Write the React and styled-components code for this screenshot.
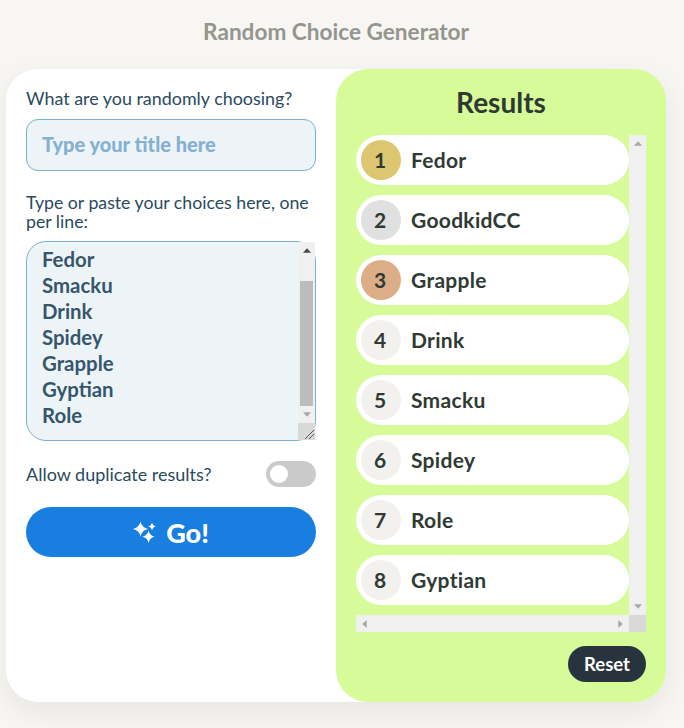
import { useEffect, useRef } from "react";
import styled, { createGlobalStyle } from "styled-components";

const GlobalStyle = createGlobalStyle`
  * {
    box-sizing: border-box;
  }
  html, body {
    margin: 0;
    padding: 0;
    background-color: #f7f6f3;
    font-family: Lato, "Noto Sans", sans-serif;
  }
`;

const Page = styled.div`
  width: 684px;
  height: 728px;
  padding: 0 18px 0 6px;
  overflow: hidden;
`;

const PageTitle = styled.h1`
  margin: 0;
  height: 69px;
  padding-top: 18px;
  font-size: 22.6px;
  line-height: 28px;
  font-weight: 700;
  text-align: center;
  color: #94958d;
`;

const Card = styled.div`
  display: grid;
  grid-template-columns: 330px 330px;
  height: 633px;
  background-color: #fff;
  border-radius: 32px;
  box-shadow: 0 10px 30px rgba(0, 0, 0, 0.07);
`;

const FormPanel = styled.div`
  display: flex;
  flex-direction: column;
  padding: 20px;
`;

const Label = styled.label`
  display: block;
  font-size: ${(p) => p.$size || "17.9px"};
  line-height: 19px;
  color: #2a4a5e;
`;

const TitleInput = styled.input`
  display: block;
  width: 100%;
  height: 52px;
  margin: 11px 0 22px;
  padding: 0 15px 3px;
  border: 1px solid #7ab0d0;
  border-radius: 12px;
  background-color: #edf4f8;
  font: 900 20px Lato, sans-serif;
  color: #2a4a5e;
  outline: none;

  &::placeholder {
    color: #85b0d0;
    opacity: 1;
  }
`;

const ChoicesField = styled.div`
  position: relative;
  height: 200px;
  margin: 10px 0 20px;
`;

const ChoicesInput = styled.textarea`
  display: block;
  width: 100%;
  height: 100%;
  padding: 14px 15px;
  border: 1px solid #7ab0d0;
  border-radius: 20px;
  background-color: #edf4f8;
  font: 700 20.4px/26px Lato, sans-serif;
  color: #36566c;
  outline: none;
  overflow: hidden;
  resize: none;
`;

const ChoicesScrollbar = styled.div`
  position: absolute;
  top: 1px;
  right: 1px;
  bottom: 1px;
  width: 17px;
  display: flex;
  flex-direction: column;
  background-color: #f0f0f0;
`;

const ScrollButton = styled.span`
  display: flex;
  align-items: center;
  justify-content: center;
  flex: 0 0 17px;
  height: 17px;
  width: 17px;
`;

const ScrollThumb = styled.span`
  flex: 1;
  margin: 22px 2px 0;
  background-color: #bcbcbc;
`;

const ScrollCorner = styled.span`
  display: block;
  flex: 0 0 17px;
  height: 17px;
  width: 17px;
  background-color: #d9d9d9;
`;

const ToggleRow = styled.div`
  display: flex;
  align-items: center;
  justify-content: space-between;
  height: 26px;
  margin-bottom: 20px;
`;

const Toggle = styled.input`
  appearance: none;
  display: flex;
  align-items: center;
  width: 50px;
  height: 26px;
  margin: 0;
  padding: 0 4px;
  border-radius: 13px;
  background-color: #cacaca;

  &::before {
    content: "";
    width: 18px;
    height: 18px;
    border-radius: 50%;
    background-color: #fff;
  }
`;

const GoButton = styled.button`
  display: flex;
  align-items: center;
  justify-content: center;
  gap: 10px;
  width: 100%;
  height: 50px;
  padding: 0;
  border: none;
  border-radius: 25px;
  background-color: #187ee0;
  font: 900 27px Lato, sans-serif;
  color: #fff;
`;

const ResultsPanel = styled.div`
  display: flex;
  flex-direction: column;
  padding: 20px;
  background-color: #d7fb98;
  border-radius: 32px;
`;

const ResultsTitle = styled.h2`
  margin: 0 0 17px;
  height: 29px;
  font-size: 28px;
  line-height: 27px;
  font-weight: 700;
  text-align: center;
  color: #2c3a33;
`;

const ResultFrame = styled.div`
  display: grid;
  grid-template-columns: 273px 17px;
  grid-template-rows: 480px 17px;
`;

const ResultList = styled.ol`
  display: flex;
  flex-direction: column;
  gap: 10px;
  margin: 0;
  padding: 0;
  list-style: none;
  overflow: hidden;
`;

const ResultRow = styled.li`
  display: flex;
  align-items: center;
  gap: 10px;
  flex: 0 0 50px;
  padding: 0 5px;
  border-radius: 25px;
  background-color: #fff;
  font-size: 21px;
  font-weight: 700;
  color: #2f3a33;
`;

const ResultName = styled.span`
  margin-bottom: 2px;
  letter-spacing: 0.3px;
`;

const medalColors = { 1: "#dcc66f", 2: "#e0e0e0", 3: "#dcae88" };

const Rank = styled.span`
  display: flex;
  align-items: center;
  justify-content: center;
  width: 40px;
  height: 40px;
  padding: 0 2px 2px 0;
  border-radius: 50%;
  background-color: ${(p) => medalColors[p.$rank] || "#f2f1ee"};
`;

const ScrollTrack = styled.div`
  display: flex;
  flex-direction: ${(p) => (p.$horizontal ? "row" : "column")};
  justify-content: space-between;
  background-color: #f0f0f0;
`;

const Footer = styled.div`
  display: flex;
  justify-content: flex-end;
  margin-top: 14px;
`;

const ResetButton = styled.button`
  width: 78px;
  height: 36px;
  padding: 0;
  border: none;
  border-radius: 18px;
  background-color: #27343e;
  font: 700 18.5px Lato, sans-serif;
  color: #fff;
`;

const results = ["Fedor", "GoodkidCC", "Grapple", "Drink", "Smacku", "Spidey", "Role", "Gyptian"];
const choices = "GoodkidCC\nFedor\nSmacku\nDrink\nSpidey\nGrapple\nGyptian\nRole";

const arrowPoints = {
  up: "0,4.5 8,4.5 4,0",
  down: "0,0 8,0 4,4.5",
  left: "4.5,0 4.5,8 0,4",
  right: "0,0 0,8 4.5,4",
};

function Arrow({ dir, color = "#a8a8a8" }) {
  const flat = dir === "up" || dir === "down";
  return (
    <svg width={flat ? 8 : 5} height={flat ? 5 : 8} viewBox={flat ? "0 0 8 4.5" : "0 0 4.5 8"}>
      <polygon points={arrowPoints[dir]} fill={color} />
    </svg>
  );
}

// four pointed star, slightly fat in the middle
const star = (x, y, r) => {
  const c = r * 0.17;
  return `M${x} ${y - r}Q${x + c} ${y - c} ${x + r} ${y}Q${x + c} ${y + c} ${x} ${y + r}Q${x - c} ${y + c} ${x - r} ${y}Q${x - c} ${y - c} ${x} ${y - r}Z`;
};

function Sparkles() {
  return (
    <svg width="23" height="22" viewBox="0 0 23 22" fill="#fff">
      <path d={star(7.5, 8, 7.5)} />
      <path d={star(19, 5.5, 3.9)} />
      <path d={star(15.5, 15.8, 6.2)} />
    </svg>
  );
}

export default function App() {
  const choicesRef = useRef(null);

  useEffect(() => {
    choicesRef.current.scrollTop = 36;
  }, []);

  return (
    <Page>
      <GlobalStyle />
      <PageTitle>Random Choice Generator</PageTitle>
      <Card>
        <FormPanel>
          <Label htmlFor="title">What are you randomly choosing?</Label>
          <TitleInput id="title" placeholder="Type your title here" />
          <Label htmlFor="choices" $size="17.7px">
            Type or paste your choices here, one per line:
          </Label>
          <ChoicesField>
            <ChoicesInput id="choices" ref={choicesRef} defaultValue={choices} spellCheck={false} />
            <ChoicesScrollbar>
              <ScrollButton>
                <Arrow dir="up" color="#484848" />
              </ScrollButton>
              <ScrollThumb />
              <ScrollButton>
                <Arrow dir="down" />
              </ScrollButton>
              <ScrollCorner>
                <svg width="17" height="17">
                  <path d="M7 16 16 7M11 16 16 11" stroke="#555" />
                </svg>
              </ScrollCorner>
            </ChoicesScrollbar>
          </ChoicesField>
          <ToggleRow>
            <Label htmlFor="duplicates" $size="18px">
              Allow duplicate results?
            </Label>
            <Toggle id="duplicates" type="checkbox" />
          </ToggleRow>
          <GoButton>
            <Sparkles />
            Go!
          </GoButton>
        </FormPanel>
        <ResultsPanel>
          <ResultsTitle>Results</ResultsTitle>
          <ResultFrame>
            <ResultList>
              {results.map((name, i) => (
                <ResultRow key={name}>
                  <Rank $rank={i + 1}>{i + 1}</Rank>
                  <ResultName>{name}</ResultName>
                </ResultRow>
              ))}
            </ResultList>
            <ScrollTrack>
              <ScrollButton>
                <Arrow dir="up" />
              </ScrollButton>
              <ScrollButton>
                <Arrow dir="down" />
              </ScrollButton>
            </ScrollTrack>
            <ScrollTrack $horizontal>
              <ScrollButton>
                <Arrow dir="left" />
              </ScrollButton>
              <ScrollButton>
                <Arrow dir="right" />
              </ScrollButton>
            </ScrollTrack>
            <ScrollCorner />
          </ResultFrame>
          <Footer>
            <ResetButton>Reset</ResetButton>
          </Footer>
        </ResultsPanel>
      </Card>
    </Page>
  );
}
